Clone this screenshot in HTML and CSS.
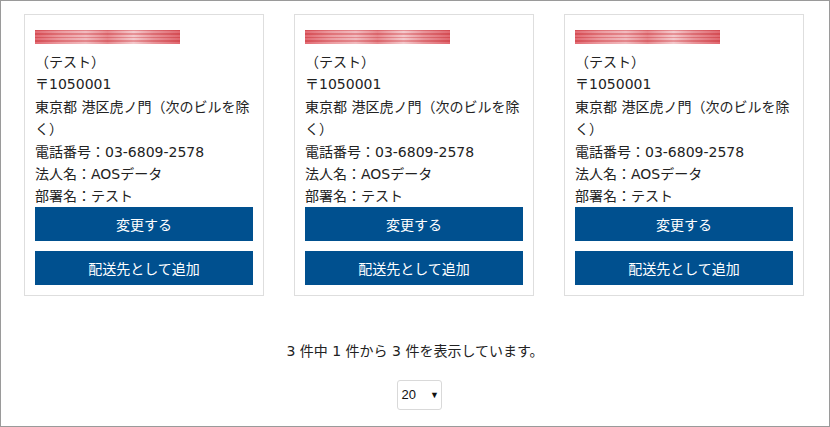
FILE: index.html
```html
<!DOCTYPE html>
<html lang="ja">
<head>
<meta charset="utf-8">
<link rel="stylesheet" href="styles.css">
</head>
<body>
<div class="frame">
  <div class="cards">
    <div class="card">
      <div class="redact"></div>
      <div class="info">
        <div>（テスト）</div>
        <div>〒1050001</div>
        <div>東京都 港区虎ノ門（次のビルを除く）</div>
        <div>電話番号：03-6809-2578</div>
        <div>法人名：AOSデータ</div>
        <div>部署名：テスト</div>
      </div>
      <button class="btn">変更する</button>
      <button class="btn">配送先として追加</button>
    </div>
    <div class="card">
      <div class="redact"></div>
      <div class="info">
        <div>（テスト）</div>
        <div>〒1050001</div>
        <div>東京都 港区虎ノ門（次のビルを除く）</div>
        <div>電話番号：03-6809-2578</div>
        <div>法人名：AOSデータ</div>
        <div>部署名：テスト</div>
      </div>
      <button class="btn">変更する</button>
      <button class="btn">配送先として追加</button>
    </div>
    <div class="card">
      <div class="redact"></div>
      <div class="info">
        <div>（テスト）</div>
        <div>〒1050001</div>
        <div>東京都 港区虎ノ門（次のビルを除く）</div>
        <div>電話番号：03-6809-2578</div>
        <div>法人名：AOSデータ</div>
        <div>部署名：テスト</div>
      </div>
      <button class="btn">変更する</button>
      <button class="btn">配送先として追加</button>
    </div>
  </div>
  <p class="summary">3 件中 1 件から 3 件を表示しています。</p>
  <div class="pager">
    <div class="select"><span>20</span><span class="arrow">▼</span></div>
  </div>
</div>
</body>
</html>
```
FILE: styles.css
```css
html, body {
  margin: 0;
  padding: 0;
  background: #fff;
}
.frame {
  box-sizing: border-box;
  width: 830px;
  height: 427px;
  border: 1px solid #9a9a9a;
  padding: 13px 0 0 23px;
  font-family: "DejaVu Sans", "Noto Sans CJK JP", sans-serif;
  font-size: 14px;
  color: #222;
}
.cards {
  display: flex;
  gap: 30px;
}
.card {
  box-sizing: border-box;
  width: 240px;
  border: 1px solid #dedede;
  padding: 10px;
  display: flex;
  flex-direction: column;
}
.redact {
  width: 145px;
  height: 14px;
  margin: 5px 0 6px;
  filter: blur(0.7px);
  background:
    repeating-linear-gradient(180deg, rgba(215,50,60,0.4) 0 1.5px, rgba(250,215,218,0.45) 1.5px 3.5px),
    linear-gradient(90deg, #e4727a 0%, #eea8ac 18%, #f3c9cc 35%, #e99499 50%, #f6d9db 68%, #eba0a5 82%, #e26f77 100%);
  background-blend-mode: multiply;
}
.info {
  line-height: 22.4px;
  padding-top: 1px;
  margin-bottom: -1px;
}
.btn {
  display: block;
  width: 100%;
  height: 34px;
  border: 0;
  margin: 0;
  padding: 0;
  background: #00508f;
  color: #fff;
  font-family: "DejaVu Sans", "Noto Sans CJK JP", sans-serif;
  font-size: 14px;
  cursor: pointer;
}
.btn + .btn {
  margin-top: 10px;
}
.summary {
  margin: 45px 0 0 -23px;
  text-align: center;
  line-height: 20px;
  font-size: 14px;
}
.pager {
  display: flex;
  justify-content: center;
  margin: 19px 0 0 -23px;
  padding-left: 8px;
}
.select {
  box-sizing: border-box;
  width: 45px;
  height: 30px;
  border: 1px solid #d9d9d9;
  border-radius: 3px;
  display: flex;
  align-items: center;
  padding: 0 0 0 4px;
  font-family: "Liberation Sans", sans-serif;
  font-size: 13px;
  color: #111;
}
.arrow {
  font-size: 9px;
  margin-left: 14px;
}
```
